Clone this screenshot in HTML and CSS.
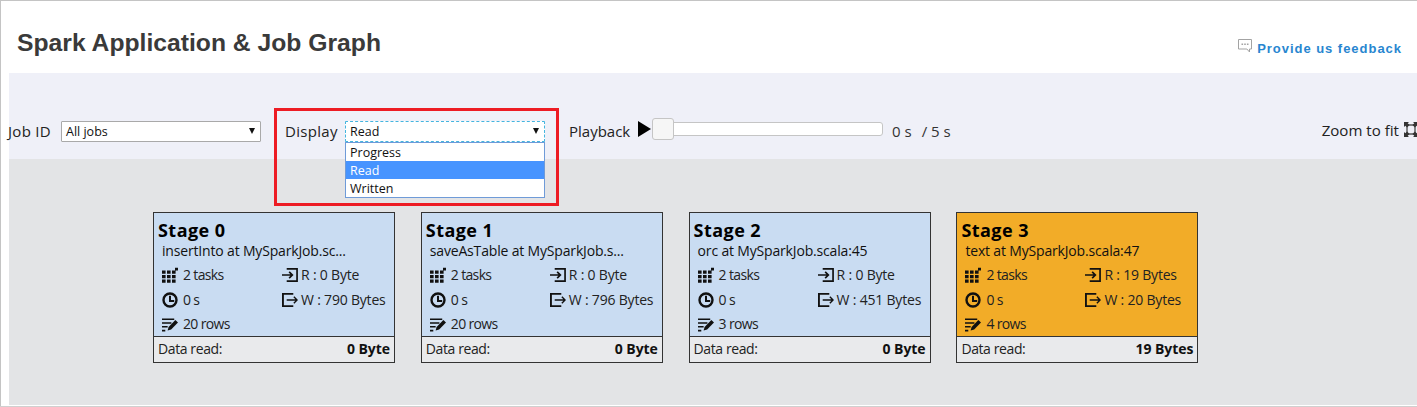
FILE: index.html
```html
<!DOCTYPE html>
<html lang="en">
<head>
<meta charset="utf-8">
<title>Spark Application &amp; Job Graph</title>
<link rel="stylesheet" href="styles.css">
</head>
<body>
<svg class="defs" width="0" height="0" aria-hidden="true">
  <symbol id="i-tasks" viewBox="0 0 16 16">
    <path d="M0 3.500h3.600v3.200H0zM5 3.500h3.600v3.200H5zM10 3.500h3.600v3.200H10zM0 8h3.600v3.200H0zM5 8h3.600v3.200H5zM10 8h3.600v3.200H10zM0 12.500h3.600v3.200H0zM5 12.500h3.600v3.200H5zM10 12.500h3.600v3.200H10zM13 .8h3v2.800h-3z" fill="currentColor"/>
  </symbol>
  <symbol id="i-clock" viewBox="0 0 16 16">
    <circle cx="8" cy="8" r="6.500" fill="none" stroke="currentColor" stroke-width="2.400"/>
    <path d="M8 3.800V9h4.200" fill="none" stroke="currentColor" stroke-width="2"/>
  </symbol>
  <symbol id="i-rows" viewBox="0 0 17 16">
    <path d="M0 3h13M0 7h10M0 11h6M0 15h3.500" fill="none" stroke="currentColor" stroke-width="1.700"/>
    <path d="M6 15l1-3.800 7.200-7.400 2.800 2.600-7.300 7.400z" fill="currentColor"/>
  </symbol>
  <symbol id="i-read" viewBox="0 0 17 16">
    <path d="M5 1.500h11v13H5" fill="none" stroke="currentColor" stroke-width="1.800"/>
    <path d="M0 8h11M7.600 4.600L11 8l-3.400 3.400" fill="none" stroke="currentColor" stroke-width="1.800"/>
  </symbol>
  <symbol id="i-write" viewBox="0 0 17 16">
    <path d="M12 1.500H1v13h11" fill="none" stroke="currentColor" stroke-width="2"/>
    <path d="M5 8h11M12.600 4.600L16 8l-3.400 3.400" fill="none" stroke="currentColor" stroke-width="1.500"/>
  </symbol>
</svg>
<main class="page">
  <header class="head">
    <h1 class="title">Spark Application &amp; Job Graph</h1>
    <a class="feedback" href="#">
      <svg class="feedback-icon" viewBox="0 0 15 15" aria-hidden="true">
        <path d="M.5.5h13v9.500h-2v3l-2.600-3H.5z" fill="#fff" stroke="#a3a3a3"/>
        <path d="M3.500 4.500h1.600v1.600H3.500zM6.200 4.500h1.600v1.600H6.200zM8.900 4.500h1.600v1.600H8.900z" fill="#a3a3a3"/>
      </svg>
      <span>Provide us feedback</span>
    </a>
  </header>

  <section class="toolbar">
    <label class="field-label job-label">Job ID</label>
    <div class="select job-select"><span>All jobs</span><i class="caret"></i></div>
    <label class="field-label display-label">Display</label>
    <div class="display-wrap">
      <div class="select display-select"><span>Read</span><i class="caret"></i></div>
      <ul class="options">
        <li>Progress</li>
        <li class="selected">Read</li>
        <li>Written</li>
      </ul>
    </div>
    <label class="field-label playback-label">Playback</label>
    <i class="play"></i>
    <div class="slider"><div class="thumb"></div></div>
    <span class="time">0 s</span>
    <span class="time total">/ 5 s</span>
    <span class="field-label zoom-label">Zoom to fit</span>
    <svg class="fit" viewBox="0 0 14 16" aria-hidden="true">
      <path d="M3 3h8v9H3z" fill="none" stroke="#555" stroke-width="1.400"/>
      <path d="M0 0h5L3.700 1.300 5.500 3.100 3.100 5.500 1.300 3.700 0 5zM14 0H9l1.300 1.300L8.500 3.100l2.400 2.400 1.800-1.800L14 5zM0 15h5l-1.300-1.300 1.800-1.800-2.400-2.400-1.800 1.800L0 10zM14 15H9l1.300-1.300-1.800-1.800 2.400-2.400 1.800 1.800L14 10z" fill="#333"/>
    </svg>
    <div class="highlight"></div>
  </section>

  <section class="graph">
    <article class="card">
      <div class="card-body">
        <h2 class="stage">Stage 0</h2>
        <p class="desc">insertInto at MySparkJob.sc...</p>
        <div class="stats">
          <div class="stat"><svg class="ico"><use href="#i-tasks"/></svg>2 tasks</div>
          <div class="stat"><svg class="ico"><use href="#i-read"/></svg>R : 0 Byte</div>
          <div class="stat"><svg class="ico"><use href="#i-clock"/></svg>0 s</div>
          <div class="stat"><svg class="ico"><use href="#i-write"/></svg>W : 790 Bytes</div>
          <div class="stat"><svg class="ico"><use href="#i-rows"/></svg>20 rows</div>
        </div>
      </div>
      <div class="card-foot"><span>Data read:</span><b>0 Byte</b></div>
    </article>
    <article class="card">
      <div class="card-body">
        <h2 class="stage">Stage 1</h2>
        <p class="desc">saveAsTable at MySparkJob.s...</p>
        <div class="stats">
          <div class="stat"><svg class="ico"><use href="#i-tasks"/></svg>2 tasks</div>
          <div class="stat"><svg class="ico"><use href="#i-read"/></svg>R : 0 Byte</div>
          <div class="stat"><svg class="ico"><use href="#i-clock"/></svg>0 s</div>
          <div class="stat"><svg class="ico"><use href="#i-write"/></svg>W : 796 Bytes</div>
          <div class="stat"><svg class="ico"><use href="#i-rows"/></svg>20 rows</div>
        </div>
      </div>
      <div class="card-foot"><span>Data read:</span><b>0 Byte</b></div>
    </article>
    <article class="card">
      <div class="card-body">
        <h2 class="stage">Stage 2</h2>
        <p class="desc">orc at MySparkJob.scala:45</p>
        <div class="stats">
          <div class="stat"><svg class="ico"><use href="#i-tasks"/></svg>2 tasks</div>
          <div class="stat"><svg class="ico"><use href="#i-read"/></svg>R : 0 Byte</div>
          <div class="stat"><svg class="ico"><use href="#i-clock"/></svg>0 s</div>
          <div class="stat"><svg class="ico"><use href="#i-write"/></svg>W : 451 Bytes</div>
          <div class="stat"><svg class="ico"><use href="#i-rows"/></svg>3 rows</div>
        </div>
      </div>
      <div class="card-foot"><span>Data read:</span><b>0 Byte</b></div>
    </article>
    <article class="card hot">
      <div class="card-body">
        <h2 class="stage">Stage 3</h2>
        <p class="desc">text at MySparkJob.scala:47</p>
        <div class="stats">
          <div class="stat"><svg class="ico"><use href="#i-tasks"/></svg>2 tasks</div>
          <div class="stat"><svg class="ico"><use href="#i-read"/></svg>R : 19 Bytes</div>
          <div class="stat"><svg class="ico"><use href="#i-clock"/></svg>0 s</div>
          <div class="stat"><svg class="ico"><use href="#i-write"/></svg>W : 20 Bytes</div>
          <div class="stat"><svg class="ico"><use href="#i-rows"/></svg>4 rows</div>
        </div>
      </div>
      <div class="card-foot"><span>Data read:</span><b>19 Bytes</b></div>
    </article>
  </section>
</main>
</body>
</html>
```
FILE: styles.css
```css
* { box-sizing: border-box; }
html, body { margin: 0; height: 100%; }
body { background: #fff; overflow: hidden; font-family: "Open Sans", "Noto Sans", sans-serif; color: #111; }
.defs { position: absolute; }
.page {
  height: 407px;
  padding: 0 0 1px 9px;
  border-top: 1px solid #c4c4c4;
  border-bottom: 1px solid #d0d0d0;
  position: relative;
  display: flex;
  flex-direction: column;
}
.page::before { content: ""; position: absolute; left: 0; top: 0; bottom: 0; width: 1px; background: #c4c4c4; }
.head { height: 72px; display: flex; justify-content: space-between; align-items: flex-start; padding: 0 15px 0 8px; }
.title { margin: 28px 0 0; font: 700 24.700px/28px "Liberation Sans", Arial, sans-serif; color: #3a3a3a; }
.feedback { margin-top: 38px; display: flex; align-items: center; gap: 4px; color: #2886d0; text-decoration: none; font: 700 13px/20px "Liberation Sans", Arial, sans-serif; letter-spacing: .97px; }
.feedback-icon { width: 15px; height: 15px; margin-top: -6px; }
.toolbar { height: 86px; background: #eff0f8; position: relative; display: flex; align-items: flex-start; padding-top: 48px; }
.field-label { font-size: 15px; line-height: 20px; color: #222; white-space: nowrap; }
.job-label { width: 52px; margin-left: -1px; letter-spacing: .3px; }
.select { height: 21px; width: 200px; background: #fff; border: 1px solid #a9a9a9; border-radius: 1px; display: flex; align-items: center; justify-content: space-between; padding: 1px 5px 0 4px; font-size: 12.500px; line-height: 18px; color: #111; }
.caret { width: 0; height: 0; border-left: 3.500px solid transparent; border-right: 3.500px solid transparent; border-top: 6px solid #111; margin-top: -3px; }
.job-select { margin-left: 1px; }
.display-label { margin-left: 24px; width: 60px; letter-spacing: .3px; }
.display-wrap { position: relative; width: 200px; }
.display-select { border: 1px dashed #45b5df; }
.options { position: absolute; z-index: 2; left: 0; top: 21px; width: 200px; margin: 0; padding: 0; list-style: none; background: #fff; border: 1px solid #6f9bd8; font-size: 12.500px; line-height: 18px; }
.options li { height: 18px; padding: 1px 0 0 4px; line-height: 17px; color: #111; }
.options .selected { background: #4794ff; color: #fff; }
.playback-label { margin-left: 24px; width: 69px; }
.play { width: 0; height: 0; margin-right: 1px; border-left: 13px solid #000; border-top: 8px solid transparent; border-bottom: 8px solid transparent; }
.slider { position: relative; width: 231px; height: 14px; margin-top: 1px; background: #fff; border: 1px solid #c5c5c5; border-radius: 3px; }
.thumb { position: absolute; left: -1px; top: -5px; width: 22px; height: 22px; background: #f6f6f6; border: 1px solid #c5c5c5; border-radius: 3px; }
.time { font-size: 15px; line-height: 20px; color: #333; margin-left: 9px; white-space: nowrap; }
.total { margin-left: 10px; }
.zoom-label { margin-left: auto; margin-top: -1px; font-size: 15.100px; }
.fit { width: 14px; height: 16px; margin: 1px -1px 0 5px; flex: none; }
.highlight { position: absolute; z-index: 3; left: 265px; top: 35px; width: 285px; height: 98px; border: 3px solid #ed1c24; pointer-events: none; }
.graph { flex: 1; background: #e3e4e6; display: flex; gap: 25.800px; padding: 53px 0 0 144px; align-items: flex-start; }
.card { width: 242px; height: 151px; border: 1px solid #333; background: #e9eaec; display: flex; flex-direction: column; flex: none; }
.card-body { height: 124px; background: #c9dcf2; border-bottom: 1px solid #333; padding: 4px 4px 0; }
.hot .card-body { background: #f2ac28; }
.stage { margin: 0; font: 700 18px/26px "Open Sans", "Noto Sans", sans-serif; letter-spacing: .45px; color: #000; }
.desc { margin: -1px 0 0 4px; font-size: 14px; line-height: 18px; color: #111; letter-spacing: -.17px; white-space: nowrap; }
.stats { margin: 3px 0 0 5px; display: grid; grid-template-columns: 120px 1fr; grid-auto-rows: 24.500px; }
.stat { display: flex; align-items: center; gap: 3px; font-size: 14px; line-height: 20px; letter-spacing: -.2px; color: #222; white-space: nowrap; }
.stat:nth-child(odd) { gap: 5px; letter-spacing: -.65px; }
.ico { width: 16px; height: 16px; flex: none; color: #111; margin-left: -1px; }
.card-foot { flex: 1; display: flex; justify-content: space-between; align-items: center; padding: 0 4px 2px 4px; font-size: 14px; letter-spacing: -.4px; color: #222; }
.card-foot b { color: #111; font-size: 14px; letter-spacing: -.05px; }
```
